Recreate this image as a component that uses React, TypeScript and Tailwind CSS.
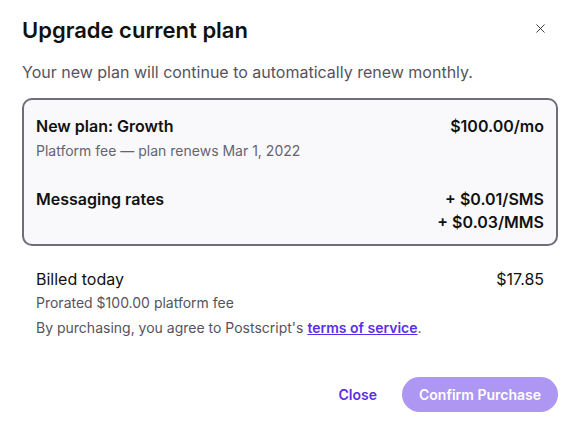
import { X } from "lucide-react";

export default function App() {
  return (
    <div
      className="w-[582px] h-[429px] bg-white text-[#111] overflow-hidden"
      style={{ fontFamily: "Inter, 'Liberation Sans', sans-serif" }}
    >
      <div className="pl-[22px] pr-[24px] pt-[16px]">
        {/* Header */}
        <div className="flex items-center justify-between h-[28px]">
          <h1 className="text-[22px] leading-[28px] font-semibold">
            Upgrade current plan
          </h1>
          <button className="mr-[10px] -mt-[4px] text-[#333]">
            <X className="w-[15px] h-[15px]" strokeWidth={1.5} />
          </button>
        </div>

        <p className="mt-[18px] text-[16px] leading-[20px] text-[#55535e]">
          Your new plan will continue to automatically renew monthly.
        </p>

        {/* Plan card */}
        <div className="mt-[16px] rounded-[10px] border-2 border-[#6f6c7e] bg-[#f9f9fc] px-[12px] pt-[16px] pb-[12px]">
          <div className="flex justify-between text-[16px] leading-[20px] font-semibold">
            <span>New plan: Growth</span>
            <span>$100.00/mo</span>
          </div>
          <p className="mt-[5px] text-[14px] leading-[20px] text-[#66646f]">
            Platform fee — plan renews Mar 1, 2022
          </p>
          <div className="mt-[28px] flex justify-between text-[16px] leading-[20px] font-semibold">
            <span>Messaging rates</span>
            <div className="flex flex-col items-end gap-[3px]">
              <span>+ $0.01/SMS</span>
              <span>+ $0.03/MMS</span>
            </div>
          </div>
        </div>

        {/* Billing */}
        <div className="px-[14px] mt-[23px]">
          <div className="flex justify-between text-[16px] leading-[20px]">
            <span>Billed today</span>
            <span>$17.85</span>
          </div>
          <p className="mt-[4px] text-[14px] leading-[20px] text-[#55535e]">
            Prorated $100.00 platform fee
          </p>
          <p className="mt-[5px] text-[14px] leading-[20px] text-[#55535e]">
            By purchasing, you agree to Postscript's{" "}
            <a className="font-semibold text-[#5a2ee5] underline" href="#">
              terms of service
            </a>
            .
          </p>
        </div>

        {/* Actions */}
        <div className="mt-[39px] flex items-center justify-end gap-[25px]">
          <button className="text-[14px] font-semibold text-[#5a2ee5]">
            Close
          </button>
          <button className="h-[35px] w-[156px] rounded-full bg-[#ae97f2] text-[14px] font-semibold text-white">
            Confirm Purchase
          </button>
        </div>
      </div>
    </div>
  );
}
